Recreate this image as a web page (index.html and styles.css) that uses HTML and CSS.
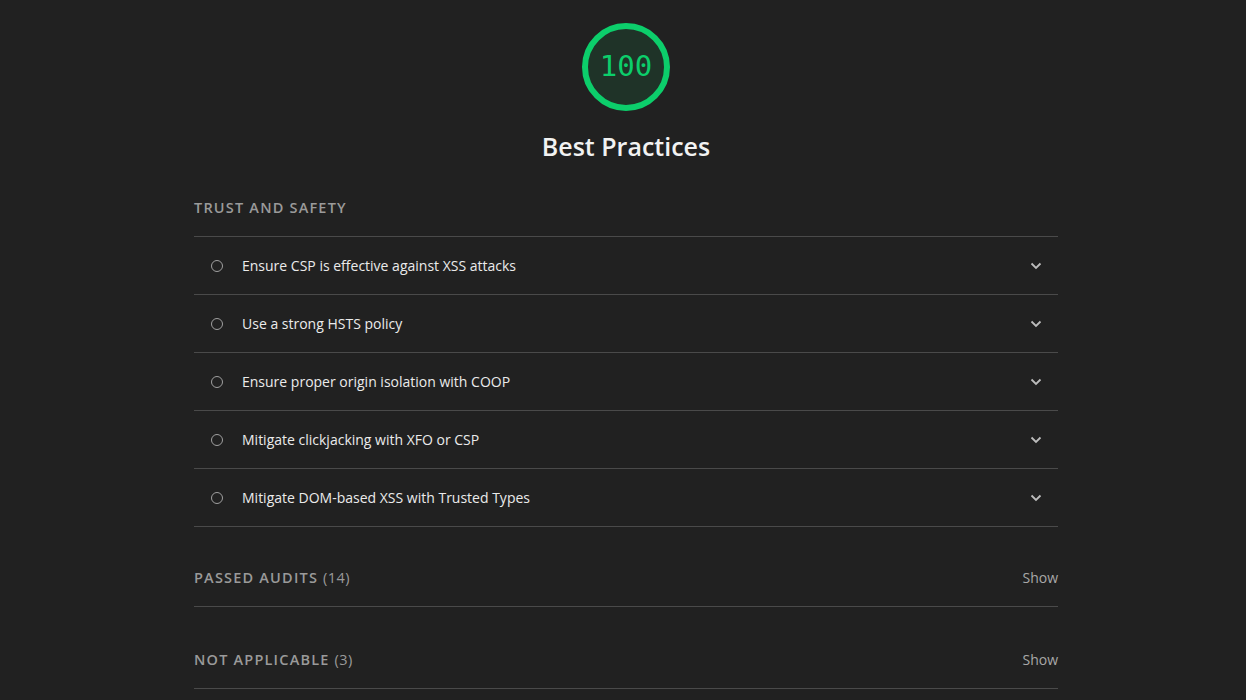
FILE: index.html
```html
<!DOCTYPE html>
<html>
<head>
<meta charset="utf-8">
<link rel="stylesheet" href="styles.css">
</head>
<body>
<div class="page">
  <div class="header">
    <div class="gauge">
      <svg width="92" height="92" viewBox="0 0 92 92">
        <circle cx="46" cy="46" r="41" fill="#1f3328" stroke="#0cce6b" stroke-width="6"/>
      </svg>
      <span class="score">100</span>
    </div>
    <h1 class="title">Best Practices</h1>
  </div>

  <div class="group-title">Trust and Safety</div>
  <ul class="audits">
    <li class="audit"><span class="dot"></span><span class="audit-text">Ensure CSP is effective against XSS attacks</span><svg class="chev" width="12" height="8" viewBox="0 0 12 8"><path d="M1.5 1.5 L6 6 L10.5 1.5" fill="none" stroke="#bdbdbd" stroke-width="1.8"/></svg></li>
    <li class="audit"><span class="dot"></span><span class="audit-text">Use a strong HSTS policy</span><svg class="chev" width="12" height="8" viewBox="0 0 12 8"><path d="M1.5 1.5 L6 6 L10.5 1.5" fill="none" stroke="#bdbdbd" stroke-width="1.8"/></svg></li>
    <li class="audit"><span class="dot"></span><span class="audit-text">Ensure proper origin isolation with COOP</span><svg class="chev" width="12" height="8" viewBox="0 0 12 8"><path d="M1.5 1.5 L6 6 L10.5 1.5" fill="none" stroke="#bdbdbd" stroke-width="1.8"/></svg></li>
    <li class="audit"><span class="dot"></span><span class="audit-text">Mitigate clickjacking with XFO or CSP</span><svg class="chev" width="12" height="8" viewBox="0 0 12 8"><path d="M1.5 1.5 L6 6 L10.5 1.5" fill="none" stroke="#bdbdbd" stroke-width="1.8"/></svg></li>
    <li class="audit"><span class="dot"></span><span class="audit-text">Mitigate DOM-based XSS with Trusted Types</span><svg class="chev" width="12" height="8" viewBox="0 0 12 8"><path d="M1.5 1.5 L6 6 L10.5 1.5" fill="none" stroke="#bdbdbd" stroke-width="1.8"/></svg></li>
  </ul>

  <div class="clump clump-passed"><span class="clump-title">Passed audits <span class="count">(14)</span></span><span class="show">Show</span></div>
  <div class="clump clump-na"><span class="clump-title">Not applicable <span class="count">(3)</span></span><span class="show">Show</span></div>
</div>
</body>
</html>
```

FILE: styles.css
```css
html, body {
  margin: 0;
  padding: 0;
  background: #212121;
}
body {
  font-family: "Open Sans", "Noto Sans", sans-serif;
  color: #e6e6e6;
  height: 700px;
  overflow: hidden;
  padding-left: 6px;
}
.page {
  width: 864px;
  margin: 0 auto;
  padding-top: 21px;
}
.header {
  display: flex;
  flex-direction: column;
  align-items: center;
}
.gauge {
  position: relative;
  width: 92px;
  height: 92px;
}
.gauge svg {
  display: block;
}
.score {
  position: absolute;
  left: 0;
  right: 0;
  top: 0;
  line-height: 90px;
  text-align: center;
  font-family: "DejaVu Sans Mono", monospace;
  font-size: 29px;
  color: #0cce6b;
}
.title {
  margin: 16px 0 0;
  font-size: 25px;
  font-weight: 600;
  color: #f2f2f2;
  line-height: 34px;
}
.group-title {
  margin-top: 35px;
  font-size: 14.5px;
  font-weight: 600;
  letter-spacing: 1.2px;
  text-transform: uppercase;
  color: #9a9a9a;
  line-height: 20px;
  padding-bottom: 18px;
  border-bottom: 1px solid #4a4a4a;
}
.audits {
  list-style: none;
  margin: 0;
  padding: 0;
}
.audit {
  display: flex;
  align-items: center;
  height: 57px;
  border-bottom: 1px solid #4a4a4a;
  font-size: 14px;
}
.dot {
  width: 10px;
  height: 10px;
  border: 1.5px solid #a0a0a0;
  border-radius: 50%;
  margin-left: 17px;
  margin-right: 19px;
  flex: none;
}
.audit-text {
  flex: 1;
  color: #ebebeb;
}
.chev {
  margin-right: 16px;
}
.clump {
  display: flex;
  justify-content: space-between;
  align-items: center;
  border-bottom: 1px solid #4a4a4a;
  box-sizing: border-box;
}
.clump-passed {
  height: 80px;
  padding-top: 22px;
}
.clump-na {
  height: 82px;
  padding-top: 24px;
}
.clump-title {
  font-size: 14.5px;
  font-weight: 600;
  letter-spacing: 1.2px;
  text-transform: uppercase;
  color: #9a9a9a;
}
.count {
  font-weight: 400;
  letter-spacing: 0.4px;
}
.show {
  font-size: 14px;
  color: #a8a8a8;
}
```
